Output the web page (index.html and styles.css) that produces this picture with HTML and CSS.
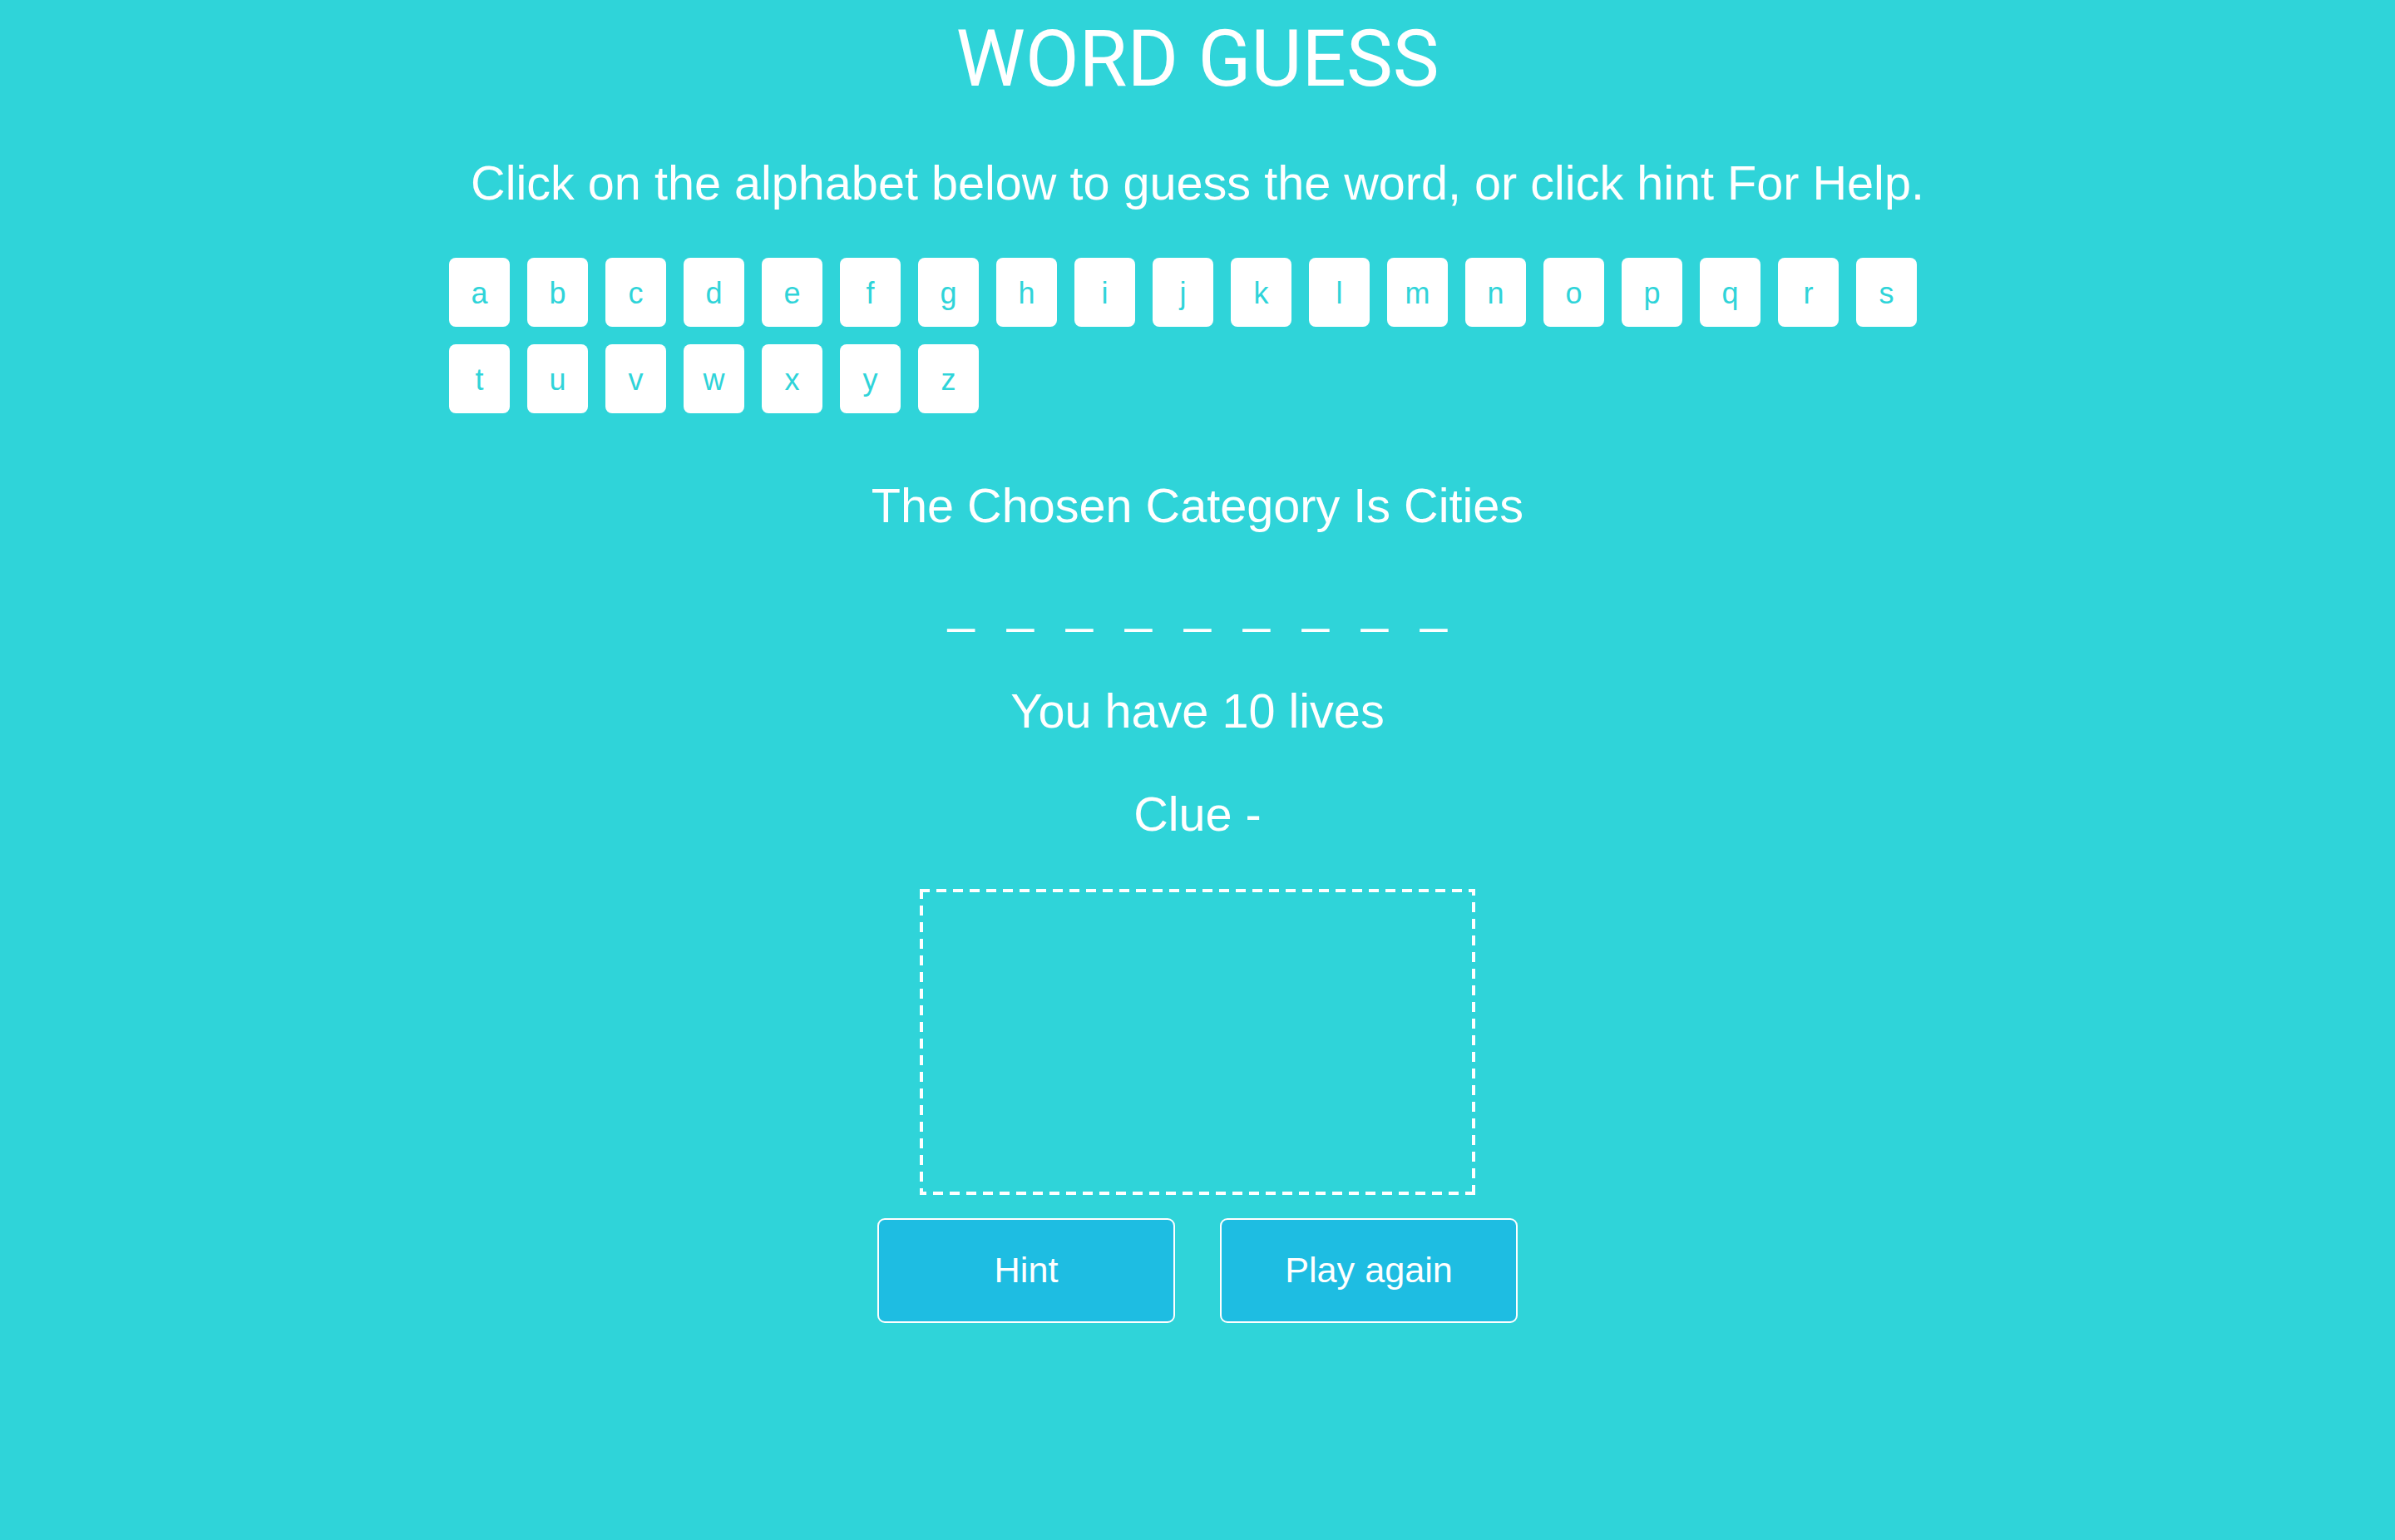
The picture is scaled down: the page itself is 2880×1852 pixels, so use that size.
FILE: index.html
```html
<!DOCTYPE html>
<html lang="en">
<head>
<meta charset="utf-8">
<title>Word Guess</title>
<link rel="stylesheet" href="styles.css">
</head>
<body>
<div class="wrapper">
  <h1 class="title">WORD GUESS</h1>
  <p class="intro">Click on the alphabet below to guess the word, or click hint For Help.</p>
  <div class="alphabet-wrap">
    <ul class="alphabet">
      <li class="letter">a</li><li class="letter">b</li><li class="letter">c</li><li class="letter">d</li><li class="letter">e</li><li class="letter">f</li><li class="letter">g</li><li class="letter">h</li><li class="letter">i</li><li class="letter">j</li><li class="letter">k</li><li class="letter">l</li><li class="letter">m</li><li class="letter">n</li><li class="letter">o</li><li class="letter">p</li><li class="letter">q</li><li class="letter">r</li><li class="letter">s</li><li class="letter">t</li><li class="letter">u</li><li class="letter">v</li><li class="letter">w</li><li class="letter">x</li><li class="letter">y</li><li class="letter">z</li>
    </ul>
  </div>
  <p class="category">The Chosen Category Is Cities</p>
  <ul class="word">
    <li class="guess">_</li><li class="guess">_</li><li class="guess">_</li><li class="guess">_</li><li class="guess">_</li><li class="guess">_</li><li class="guess">_</li><li class="guess">_</li><li class="guess">_</li>
  </ul>
  <p class="lives">You have 10 lives</p>
  <p class="clue">Clue -</p>
  <div class="stage"></div>
  <div class="actions">
    <button class="btn">Hint</button>
    <button class="btn">Play again</button>
  </div>
</div>
</body>
</html>
```
FILE: styles.css
```css
html {
  background: #2fd4d9;
}
body {
  margin: 0;
  background: #2fd4d9;
  color: #ffffff;
  font-family: "Liberation Sans", Arial, Helvetica, sans-serif;
  min-height: 1852px;
}
.wrapper {
  padding-top: 16px;
  text-align: center;
}
.title {
  margin: 0;
  font-family: Roboto, "Liberation Sans", sans-serif;
  font-weight: 400;
  font-size: 94px;
  line-height: 110px;
}
.intro {
  margin: 61px 0 0;
  font-size: 57.6px;
  line-height: 66px;
}
.alphabet-wrap {
  width: 1800px;
  margin: 57px auto 0;
}
.alphabet {
  list-style: none;
  margin: 0;
  padding: 0;
  display: flex;
  flex-wrap: wrap;
  column-gap: 21px;
  row-gap: 21px;
}
.letter {
  width: 73px;
  height: 83px;
  box-sizing: border-box;
  padding-top: 2px;
  background: #ffffff;
  border-radius: 8px;
  color: #2fd4d9;
  font-size: 36px;
  line-height: 81px;
  text-align: center;
}
.category {
  margin: 78px 0 0;
  font-size: 57.6px;
  line-height: 66px;
}
.word {
  list-style: none;
  margin: 55px 0 0;
  padding: 0;
  display: flex;
  justify-content: center;
  column-gap: 39px;
  font-size: 57.6px;
  line-height: 66px;
}
.guess {
  display: block;
}
.lives {
  margin: 60px 0 0;
  font-size: 57.6px;
  line-height: 66px;
}
.clue {
  margin: 58px 0 0;
  font-size: 57.6px;
  line-height: 66px;
}
.stage {
  width: 668px;
  height: 368px;
  box-sizing: border-box;
  margin: 57px auto 0;
  background:
    repeating-linear-gradient(to right, #ffffff 0 12px, transparent 12px 20px) left top / 100% 4px no-repeat,
    repeating-linear-gradient(to left, #ffffff 0 12px, transparent 12px 20px) right bottom / 100% 4px no-repeat,
    repeating-linear-gradient(to bottom, #ffffff 0 12px, transparent 12px 20px) left top / 4px 100% no-repeat,
    repeating-linear-gradient(to top, #ffffff 0 12px, transparent 12px 20px) right bottom / 4px 100% no-repeat;
}
.actions {
  margin-top: 28px;
  display: flex;
  justify-content: center;
  column-gap: 54px;
}
.btn {
  width: 358px;
  height: 126px;
  box-sizing: border-box;
  margin: 0;
  padding: 0;
  background: #1ebde2;
  border: 2px solid #ffffff;
  border-radius: 9px;
  color: #ffffff;
  font-family: "Liberation Sans", Arial, Helvetica, sans-serif;
  font-size: 43.2px;
  line-height: 1;
  cursor: pointer;
}
```
